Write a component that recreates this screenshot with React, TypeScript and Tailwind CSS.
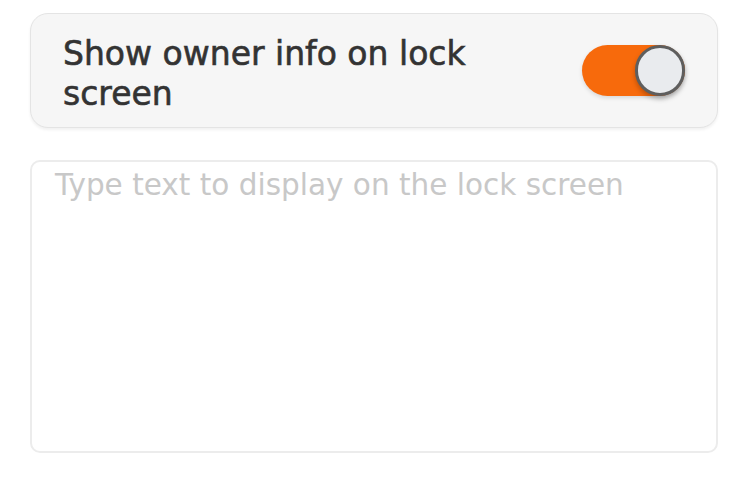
import React, { useState } from "react";

export default function App() {
  const [on, setOn] = useState(true);
  return (
    <div
      className="w-[750px] h-[500px] bg-white overflow-hidden"
      style={{ fontFamily: "'DejaVu Sans', 'Noto Sans', sans-serif" }}
    >
      <div className="pt-[13px] pl-[30px] pr-[32px] flex flex-col gap-[32px]">
        <div className="h-[115px] rounded-[18px] border border-[#e4e4e4] bg-[#f6f6f6] shadow-[0_2px_3px_rgba(0,0,0,0.06)] flex items-center pl-[32px] pr-[32px]">
          <div className="flex-1 mt-[6px] text-[33px] leading-[40px] text-[#333333] [-webkit-text-stroke:0.6px_#333333]">
            Show owner info on lock
            <br />
            screen
          </div>
          <button
            onClick={() => setOn(!on)}
            className="relative w-[103px] h-[51px] rounded-full bg-[#f76a0c] shadow-[0_2px_4px_rgba(0,0,0,0.12)]"
          >
            <span className="absolute right-0 top-0 w-[50px] h-[51px] rounded-full bg-[#e9ebee] border-[3px] border-[#5e5e5e] shadow-[0_3px_5px_rgba(0,0,0,0.25)]" />
          </button>
        </div>
        <div className="h-[293px] rounded-[10px] border-2 border-[#ececec] bg-white pl-[23px] pt-[5px]">
          <div className="text-[29.5px] leading-[36px] text-[#c8c8c8]">
            Type text to display on the lock screen
          </div>
        </div>
      </div>
    </div>
  );
}
